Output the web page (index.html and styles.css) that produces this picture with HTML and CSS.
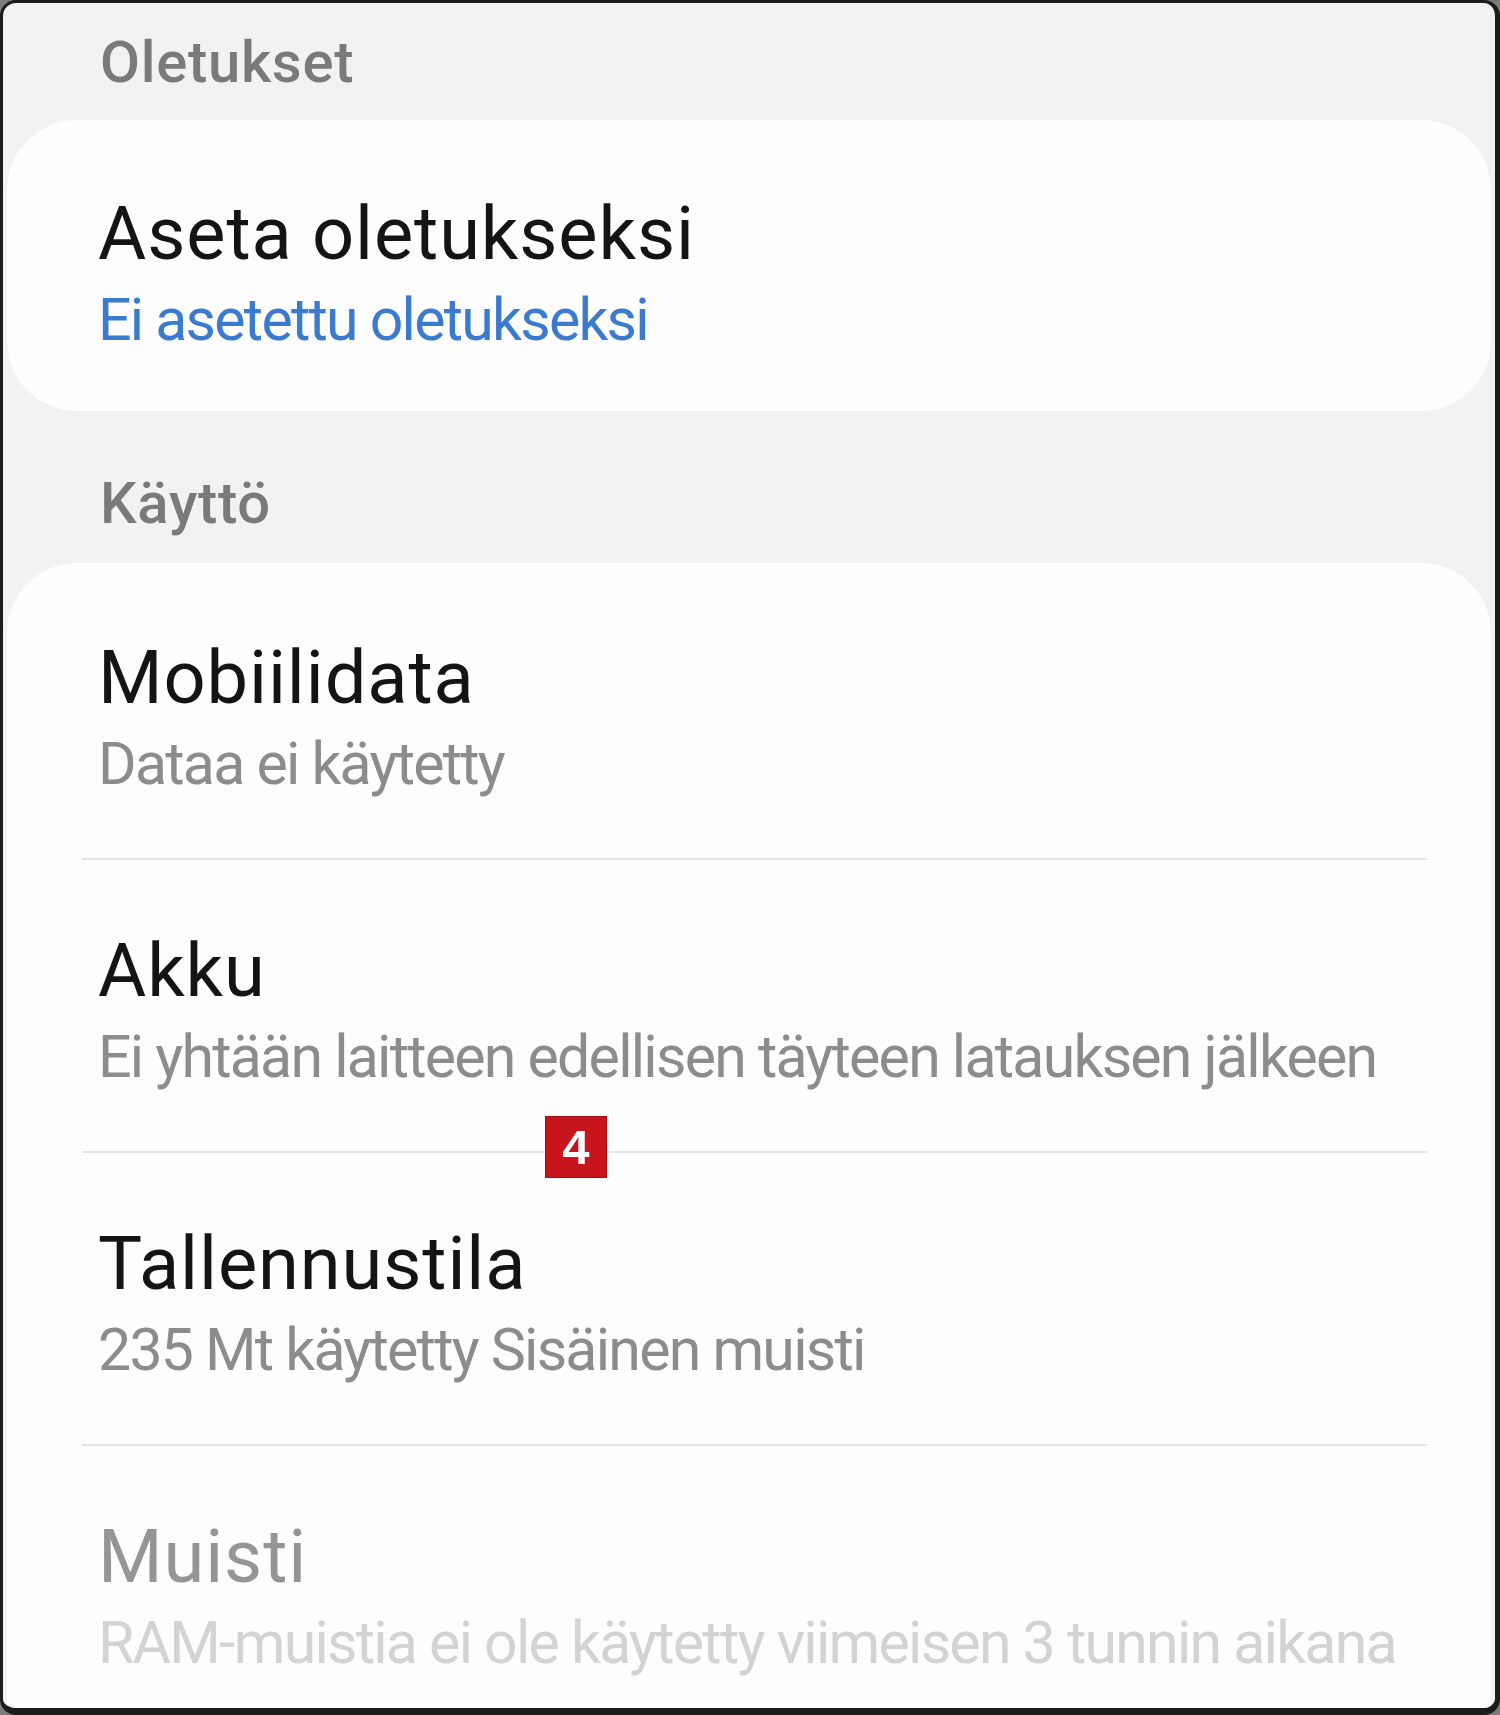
FILE: index.html
```html
<!DOCTYPE html>
<html lang="fi">
<head>
<meta charset="utf-8">
<title>Oletukset</title>
<link rel="stylesheet" href="styles.css">
</head>
<body>
<div class="frame">
  <div class="section-title first">Oletukset</div>
  <div class="card card-single">
    <div class="row-title">Aseta oletukseksi</div>
    <div class="row-sub link">Ei asetettu oletukseksi</div>
  </div>
  <div class="section-title second">Käyttö</div>
  <div class="card card-list">
    <div class="row">
      <div class="row-title">Mobiilidata</div>
      <div class="row-sub">Dataa ei käytetty</div>
    </div>
    <div class="divider"></div>
    <div class="row">
      <div class="row-title">Akku</div>
      <div class="row-sub">Ei yhtään laitteen edellisen täyteen latauksen jälkeen</div>
    </div>
    <div class="divider"></div>
    <div class="row">
      <div class="row-title">Tallennustila</div>
      <div class="row-sub">235 Mt käytetty Sisäinen muisti</div>
    </div>
    <div class="divider"></div>
    <div class="row disabled">
      <div class="row-title">Muisti</div>
      <div class="row-sub">RAM-muistia ei ole käytetty viimeisen 3 tunnin aikana</div>
    </div>
    <div class="badge">4</div>
  </div>
</div>
</body>
</html>
```
FILE: styles.css
```css
html, body {
  margin: 0;
  padding: 0;
  background: #7c7c7c;
}

.frame {
  width: 1500px;
  height: 1715px;
  box-sizing: border-box;
  border-style: solid;
  border-color: #1c1c1c;
  border-width: 3px 5px 7px 3px;
  border-radius: 16px;
  background: #f2f2f2;
  overflow: hidden;
  display: flex;
  flex-direction: column;
  padding: 0 4px;
  font-family: Roboto, "Noto Sans", "Liberation Sans", sans-serif;
}

.section-title {
  font-size: 58px;
  line-height: 68px;
  font-weight: 500;
  color: #7a7a7a;
  padding-left: 93px;
  letter-spacing: 0.7px;
}

.section-title.first {
  margin-top: 25px;
  margin-bottom: 24px;
}

.section-title.second {
  margin-top: 58px;
  margin-bottom: 26px;
}

.card {
  background: #fdfdfd;
  border-radius: 70px;
  position: relative;
}

.card-single {
  padding: 70px 0 56px 91px;
  height: 165px;
}

.card-list {
  flex: 1;
  border-radius: 70px 70px 0 0;
  padding-top: 4px;
}

.row {
  padding: 67px 0 59px 91px;
}

.row-title {
  font-size: 74px;
  line-height: 87px;
  color: #141414;
  letter-spacing: 0.9px;
  white-space: nowrap;
}

.row-sub {
  margin-top: 8px;
  font-size: 59px;
  line-height: 70px;
  color: #8c8c8c;
  letter-spacing: -1.75px;
  white-space: nowrap;
}

.row-sub.link {
  color: #3b7bcf;
}

.row.disabled .row-title {
  color: #959595;
}

.row.disabled .row-sub {
  color: #d3d3d3;
}

.divider {
  height: 2px;
  background: #e4e4e4;
  margin: 0 64px 0 75px;
}

.badge {
  position: absolute;
  left: 538px;
  top: 553px;
  width: 62px;
  height: 62px;
  box-sizing: border-box;
  border: 1px solid #a50e14;
  background: #c8141b;
  color: #ffffff;
  font-family: "Liberation Sans", Arial, sans-serif;
  font-weight: 700;
  font-size: 49px;
  line-height: 60px;
  text-align: center;
}
```
